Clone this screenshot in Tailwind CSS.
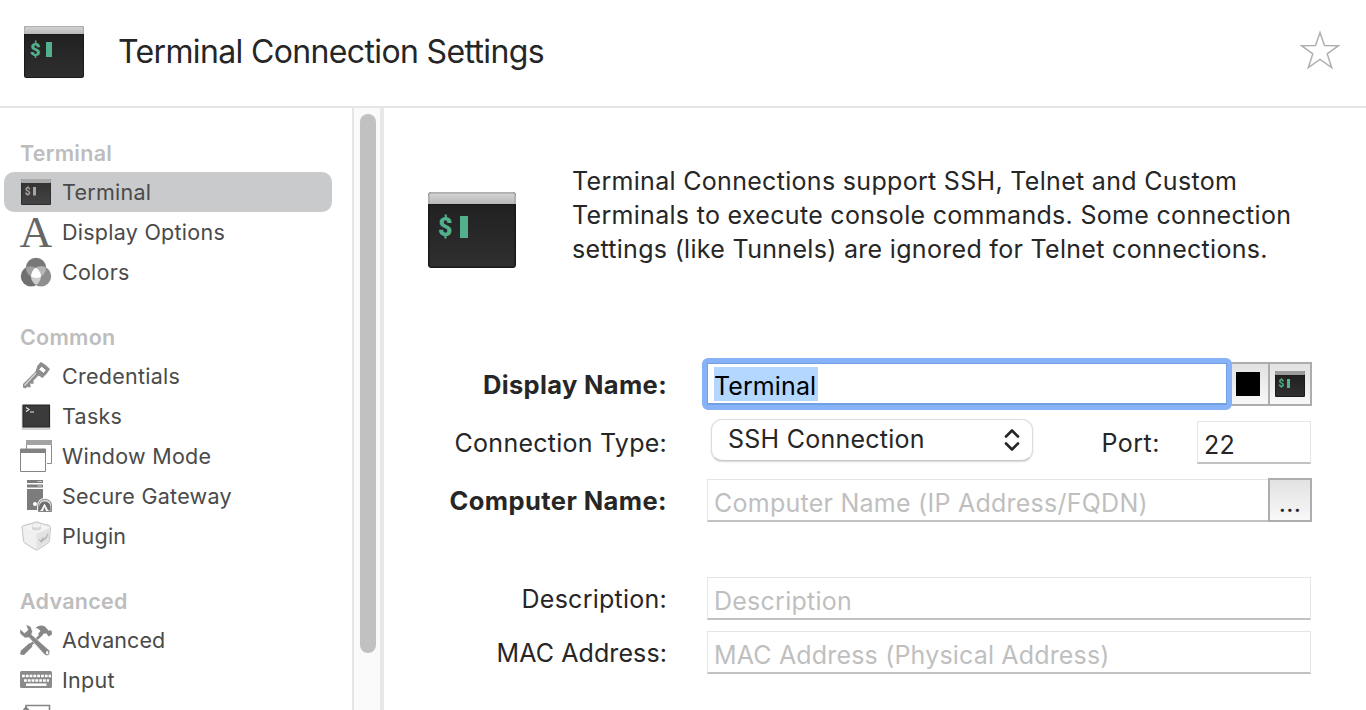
<!DOCTYPE html>
<html lang="en">
<head>
<meta charset="utf-8">
<title>Terminal Connection Settings</title>
<script src="https://cdn.jsdelivr.net/npm/@tailwindcss/browser@4"></script>
</head>
<body class="bg-white text-[#262626] font-['Inter','Liberation_Sans',sans-serif]">
<svg width="0" height="0" class="absolute">
  <defs>
    <linearGradient id="bar" x1="0" y1="0" x2="0" y2="1"><stop offset="0" stop-color="#d2d2d2"/><stop offset="1" stop-color="#b9b9b9"/></linearGradient>
    <linearGradient id="scr" x1="0" y1="0" x2="0" y2="1"><stop offset="0" stop-color="#212121"/><stop offset="1" stop-color="#2f2f2f"/></linearGradient>
    <linearGradient id="scrGray" x1="0" y1="0" x2="0" y2="1"><stop offset="0" stop-color="#333"/><stop offset="1" stop-color="#444"/></linearGradient>
  </defs>
</svg>
<div class="flex h-[710px] w-[1366px] flex-col overflow-hidden">
  <header class="flex h-[108px] shrink-0 items-start border-b-2 border-[#e5e5e5] pl-6 pr-[26px]">
    <svg class="mt-[26px] h-[52px] w-[60px] shrink-0" viewBox="0 0 60 52">
      <rect width="60" height="52" rx="2.5" fill="#1a1a1a"/><path d="M0 8V2.500Q0 0 2.500 0H57.500Q60 0 60 2.500V8Z" fill="#b0b0b0"/><rect x="1" y="1" width="58" height="7" rx="1" fill="url(#bar)"/><rect x="1" y="9" width="58" height="42" rx="1" fill="url(#scr)"/>
      <text x="6" y="29.700" font-family="Roboto" font-weight="900" font-size="18.500" fill="#53b08c">$</text><rect x="22" y="16" width="6" height="15" fill="#53b08c"/>
    </svg>
    <h1 class="ml-[34px] mt-[31px] whitespace-nowrap text-[32px] leading-[41px] tracking-[-0.640px]">Terminal Connection Settings</h1>
    <svg class="ml-auto mt-[30px] h-10 w-10 shrink-0" viewBox="0 0 40 40" fill="none" stroke="#b0b0b0" stroke-width="1.500"><path d="M20 2.500L24.500 15.500L38.500 15.700L27.200 23.800L31.700 37.700L20 29.500L8.300 37.700L12.800 23.800L1.500 15.700L15.500 15.500Z"/></svg>
  </header>
  <div class="flex min-h-0 flex-1">
    <nav class="h-[602px] w-[352px] shrink-0 overflow-hidden pl-1 text-[21.500px] leading-10 tracking-[0.260px] text-[#4a4a4a]">
      <h2 class="h-16 pl-4 pt-[26px] font-semibold leading-[38px] text-[#bdbdbd]">Terminal</h2>
      <div class="flex h-10 w-[328px] items-center rounded-[10px] bg-[#c9cacc] pl-4">
        <svg class="mr-3 h-8 w-[30px] shrink-0 translate-x-[1px]" viewBox="0 0 30 32"><rect y="3" width="30" height="26" rx="1" fill="#2e2e2e"/><rect y="3" width="30" height="4" rx="1" fill="#aaa"/><rect x="1" y="7" width="28" height="21" fill="url(#scrGray)"/><text x="3.800" y="18.500" font-family="Roboto" font-weight="700" font-size="10" fill="#a5a5a5">$</text><rect x="12" y="11" width="3" height="8.500" fill="#a5a5a5"/></svg>
        <span>Terminal</span>
      </div>
      <div class="flex h-10 items-center pl-4">
        <svg class="mr-2.5 h-8 w-8 shrink-0 overflow-visible" viewBox="0 0 32 32"><text x="-.5" y="31" font-family="Liberation Serif" font-size="44" fill="#666" textLength="33" lengthAdjust="spacingAndGlyphs">A</text></svg>
        <span>Display Options</span>
      </div>
      <div class="flex h-10 items-center pl-4">
        <svg class="mr-2.5 h-8 w-8 shrink-0" viewBox="0 0 32 32"><defs><clipPath id="c1"><circle cx="16" cy="12" r="10"/></clipPath><clipPath id="c2"><circle cx="11" cy="20.500" r="10"/></clipPath></defs><circle cx="16" cy="12" r="10.200" fill="#787878"/><circle cx="11" cy="20.300" r="10.200" fill="#707070"/><circle cx="21" cy="20.300" r="10.200" fill="#8e8e8e"/><g clip-path="url(#c1)"><circle cx="11" cy="20.300" r="10" fill="#a2a2a2"/><circle cx="21" cy="20.300" r="10" fill="#b6b6b6"/></g><g clip-path="url(#c2)"><circle cx="21" cy="20.300" r="10" fill="#cecece"/><g clip-path="url(#c1)"><circle cx="21" cy="20.300" r="10" fill="#fff"/></g></g></svg>
        <span>Colors</span>
      </div>
      <h2 class="h-16 pl-4 pt-[26px] font-semibold leading-[38px] text-[#bdbdbd]">Common</h2>
      <div class="flex h-10 items-center pl-4">
        <svg class="mr-2.5 h-8 w-8 shrink-0" viewBox="0 0 32 32"><path d="M17.500 5.500L20.800 2L25 4.500L30 9L26.500 14L22.500 18L18.500 15.500L17 17L5.500 28.500L3 27.500V24L15.500 11.500Z" fill="#8e8e8e"/><path d="M21.500 6L26.500 10L23.500 13.500L18.500 9.500Z" fill="#fff" stroke="#7c7c7c"/><path d="M16 13L4.500 25.500" stroke="#d8d8d8" stroke-width="1.300"/><path d="M7.500 26L10.500 25.500M11 22.500L13.500 22" stroke="#8e8e8e" stroke-width="3"/></svg>
        <span>Credentials</span>
      </div>
      <div class="flex h-10 items-center pl-4">
        <svg class="mr-2.5 h-8 w-8 shrink-0" viewBox="0 0 32 32"><rect x="1.500" y="5" width="29" height="25" rx="1" fill="#d5d5d5"/><rect x="3" y="5" width="26.500" height="22" fill="#3b3b3b" stroke="#242424"/><path d="M6 7.500L9 9.500L6 11.500M10 12H14" fill="none" stroke="#ececec" stroke-width="1.200"/></svg>
        <span>Tasks</span>
      </div>
      <div class="flex h-10 items-center pl-4">
        <svg class="mr-2.5 h-8 w-8 shrink-0" viewBox="0 0 32 32"><path d="M6.500 9V.5H31.500V23.500H27" fill="none" stroke="#8b8b8b"/><rect x="6" width="26" height="5" fill="#a3a3a3"/><path d="M.5 9H25.500V31.500H.5Z" fill="#fff" stroke="#858585"/><rect y="9" width="26" height="4" fill="#828282"/></svg>
        <span>Window Mode</span>
      </div>
      <div class="flex h-10 items-center pl-4">
        <svg class="mr-2.5 h-8 w-8 shrink-0" viewBox="0 0 32 32"><path d="M7 0H23V3H7ZM7 4.500H23V7.500H7ZM7 9H23V30H7Z" fill="#7c7c7c"/><path d="M17.500 1.500H22M17.500 6H22" stroke="#ccc"/><circle cx="15" cy="24" r="2" fill="#fff"/><path d="M17 32V26Q18 18 24.500 18Q32 18 32 26V32Z" fill="#f2f2f2"/><path d="M18.500 31.500V26Q19 19.500 24.500 19.500Q31.500 19.500 31.500 26V31.500Z" fill="#e4e4e4" stroke="#858585"/><path d="M19 31V27Q20 21.500 24.500 21.500Q30 21.500 30.500 27V31L27.500 30L24.500 24L21.500 30Z" fill="#6d6d6d"/><path d="M24.500 23.500L28.500 31H20.500Z" fill="#f4f4f4"/><path d="M24.500 27L26 31H23Z" fill="#777"/></svg>
        <span>Secure Gateway</span>
      </div>
      <div class="flex h-10 items-center pl-4">
        <svg class="mr-2.5 h-8 w-8 shrink-0" viewBox="0 0 32 32"><path d="M2 7Q2 6 3.500 5.500L13 3Q16.500 .5 20 3L29 5.500Q30.500 6 30.500 7.500L29.500 20.500Q29.500 22 28.500 22.800L18 29.500Q16.500 30.500 15 29.500L4.500 22.800Q3.500 22 3.500 20.500Z" fill="#ececec" stroke="#c4c4c4"/><path d="M3 8.500L16.500 14V29L4.500 21.500Z" fill="#f0f0f0"/><path d="M29.800 8.500L16.500 14V29L28.500 21.500Z" fill="#e2e2e2"/><path d="M3.500 7.500L16 3L29.500 7.500L16.500 13Z" fill="#f5f5f5"/><ellipse cx="16.500" cy="8" rx="4.800" ry="2.500" fill="#d6d6d6"/><ellipse cx="16.500" cy="5.500" rx="4.300" ry="2.300" fill="#f3f3f3" stroke="#d5d5d5" stroke-width=".6"/><path d="M19 19L21 21L23 17.500L24 19.500L28 13.500L26.500 18L21 22.500Z" fill="#b8b8b8" stroke="#b0b0b0" stroke-width=".6"/></svg>
        <span>Plugin</span>
      </div>
      <h2 class="h-16 pl-4 pt-[26px] font-semibold leading-[38px] text-[#bdbdbd]">Advanced</h2>
      <div class="flex h-10 items-center pl-4">
        <svg class="mr-2.5 h-8 w-8 shrink-0" viewBox="0 0 32 32"><path d="M15.500 4Q20 0 25 2.500L28.500 6.500L31.500 6.500L32 10.500L28.500 12.500L26.500 9.500L24 9.500L20.500 12.500L18 10L20.500 7Q18.500 4 15.500 4Z" fill="#878787"/><path d="M22 10L9 22.500" stroke="#878787" stroke-width="2.500"/><path d="M9.500 19L12.500 22.500L4 31L0 30.500L1 26.500Z" fill="#878787"/><path d="M6 .5L10.500 2.500L12.500 7.500L11.500 10.500L29.500 26.500Q30.500 29.500 28 31.500Q26 32 24 30L9 13.500L5 14L0 9.500V5L4.500 9L8 6Z" fill="#878787" stroke="#fff" stroke-width=".5"/><ellipse cx="27.200" cy="28.700" rx="1.200" ry="1.600" fill="#fff"/></svg>
        <span class="tracking-[0.050px]">Advanced</span>
      </div>
      <div class="flex h-10 items-center pl-4">
        <svg class="mr-2.5 h-8 w-8 shrink-0" viewBox="0 0 32 32"><rect y="7" width="32" height="17" rx="1.500" fill="#8b8b8b"/><path d="M2 12H31M4 16.500H29" stroke="#fff" stroke-width="2.700" stroke-dasharray="2.800 1"/><path d="M6 20.700H26.500" stroke="#fff" stroke-width="2.500"/></svg>
        <span>Input</span>
      </div>
      <div class="h-10 pl-4">
        <svg class="mt-1 h-8 w-8" viewBox="0 0 32 32"><path d="M6 1.500H29.500V30H6Z" fill="#fff" stroke="#858585" stroke-width="1.600"/><path d="M3.500 6L6 3.500L9 6.500" stroke="#777" fill="none" stroke-width="1.500"/></svg>
      </div>
    </nav>
    <div class="flex w-8 shrink-0 border-l-2 border-r-4 border-l-[#e5e5e5] border-r-[#e8e8e8] bg-[#fafafa] pl-1.5 pt-1.5">
      <div class="h-[539px] w-4 rounded-full bg-[#c1c1c1]"></div>
    </div>
    <main class="flex flex-1 flex-col text-[25px] tracking-[0.250px]">
      <section class="flex h-[250px] shrink-0 items-start pl-11">
        <svg class="mt-[84px] h-[76px] w-[88px] shrink-0" viewBox="0 0 88 76">
          <rect width="88" height="76" rx="3.500" fill="#181818"/><path d="M0 12V3.500Q0 0 3.500 0H84.500Q88 0 88 3.500V12Z" fill="#b0b0b0"/><rect x="1.800" y="1.800" width="84.400" height="10.200" rx="1" fill="url(#bar)"/><rect x="1.500" y="13" width="85" height="61.500" rx="1.500" fill="url(#scr)"/>
          <text x="10" y="44" font-family="Roboto" font-weight="900" font-size="25" fill="#53b08c">$</text><rect x="32" y="24" width="8" height="22" fill="#53b08c"/>
        </svg>
        <p class="ml-14 mt-14 whitespace-nowrap leading-[34px] tracking-[0.310px]">Terminal Connections support SSH, Telnet and Custom<br>Terminals to execute console commands. Some connection<br>settings (like Tunnels) are ignored for Telnet connections.</p>
      </section>

      <div class="flex h-[52px] items-start">
        <label class="w-[283px] text-right text-[25.500px] font-bold leading-[54px] tracking-[0.350px]">Display Name:</label>
        <div class="relative z-10 ml-[35px] flex h-[52px] w-[530px] items-center rounded-[6px] border-[6px] border-[#88b2f7] bg-white pl-[6px]">
          <span class="h-[34px] w-[104px] whitespace-nowrap bg-[#b3d7ff] pt-[2px] leading-[34px] tracking-[0.100px] text-black">Terminal</span>
          <span class="absolute inset-y-[-1px] left-[-1px] right-[-1px] border border-b-2 border-[#719fe3]"></span>
        </div>
        <div class="-ml-[5px] mt-1 flex h-11 w-[85px] border-2 border-[#adadad] bg-linear-to-b from-[#e2e2e2] to-[#f8f8f8]">
          <div class="flex w-[41px] items-center border-r-2 border-[#adadad] pl-[7px]"><div class="h-6 w-6 bg-black"></div></div>
          <svg class="ml-[5px] mt-[7px] h-[26px] w-[30px]" viewBox="0 0 30 26"><rect width="30" height="26" rx="1" fill="#1c1c1c"/><rect width="30" height="4" rx="1" fill="#9c9c9c"/><rect x="1" y="5" width="28" height="20" fill="url(#scr)"/><text x="3.600" y="15.700" font-family="Roboto" font-weight="700" font-size="10" fill="#53b08c">$</text><rect x="12" y="8" width="3" height="9" fill="#53b08c"/></svg>
        </div>
      </div>

      <div class="mt-2 flex h-[60px] items-start">
        <label class="w-[283px] text-right leading-[50px]">Connection Type:</label>
        <div class="ml-11 mt-[1px] flex h-[42px] w-[322px] items-center rounded-[11px] border border-[#dedede] border-b-[#c6c6c6] bg-white pl-4 shadow-[0_1px_2px_rgba(0,0,0,0.15)]">
          <span class="whitespace-nowrap">SSH Connection</span>
          <svg class="ml-auto mr-3 h-6 w-4" viewBox="0 0 16 24" fill="none" stroke="#262626" stroke-width="2.600" stroke-linecap="round" stroke-linejoin="round"><path d="M2 8.500L8 2.500L14 8.500M2 15.500L8 21.500L14 15.500"/></svg>
        </div>
        <label class="w-[127px] text-right leading-[50px] tracking-[0.500px]">Port:</label>
        <div class="ml-[37px] mt-[3px] h-[43px] w-[114px] border border-b-2 border-[#e6e6e6] border-b-[#c2c2c2] pl-1.5 leading-[47px]">22</div>
      </div>

      <div class="flex h-[98px] items-start">
        <label class="w-[283px] text-right text-[25.500px] font-bold leading-[46px] tracking-[0.420px]">Computer Name:</label>
        <div class="ml-10 mt-[1px] h-[43px] w-[561px] whitespace-nowrap border border-b-2 border-r-0 border-[#e6e6e6] border-b-[#c2c2c2] pl-1.5 leading-[46px] text-[#bfbfbf]">Computer Name (IP Address/FQDN)</div>
        <div class="h-11 w-11 border-2 border-[#adadad] bg-linear-to-b from-[#e2e2e2] to-[#f8f8f8] text-center leading-[46px]">...</div>
      </div>

      <div class="flex h-[54px] items-start">
        <label class="w-[283px] text-right leading-[46px]">Description:</label>
        <div class="ml-10 mt-[1px] h-[43px] w-[604px] border border-b-2 border-[#e6e6e6] border-b-[#c2c2c2] pl-1.5 leading-[46px] text-[#bfbfbf]">Description</div>
      </div>
      <div class="flex h-[54px] items-start">
        <label class="w-[283px] text-right leading-[46px] tracking-[0.100px]">MAC Address:</label>
        <div class="ml-10 mt-[1px] h-[43px] w-[604px] border border-b-2 border-[#e6e6e6] border-b-[#c2c2c2] pl-1.5 leading-[46px] tracking-[0.170px] text-[#bfbfbf]">MAC Address (Physical Address)</div>
      </div>
    </main>
  </div>
</div>
</body>
</html>
